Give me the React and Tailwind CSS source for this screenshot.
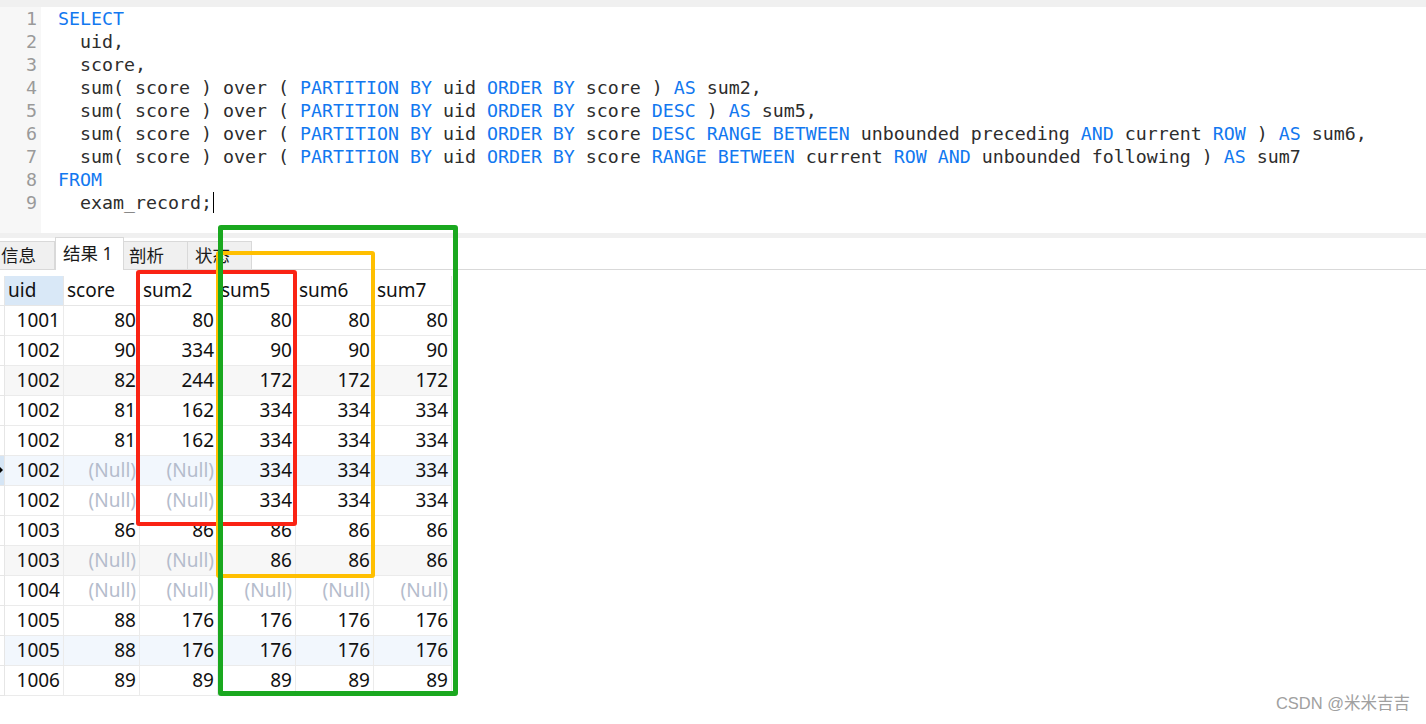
import React from "react";

const K = ({ children }) => <span className="text-[#1278f0]">{children}</span>;

const codeLines = [
  [<K key="a">SELECT</K>],
  ["  uid,"],
  ["  score,"],
  ["  sum( score ) over ( ", <K key="a">PARTITION BY</K>, " uid ", <K key="b">ORDER BY</K>, " score ) ", <K key="c">AS</K>, " sum2,"],
  ["  sum( score ) over ( ", <K key="a">PARTITION BY</K>, " uid ", <K key="b">ORDER BY</K>, " score ", <K key="d">DESC</K>, " ) ", <K key="c">AS</K>, " sum5,"],
  ["  sum( score ) over ( ", <K key="a">PARTITION BY</K>, " uid ", <K key="b">ORDER BY</K>, " score ", <K key="d">DESC RANGE BETWEEN</K>, " unbounded preceding ", <K key="e">AND</K>, " current ", <K key="f">ROW</K>, " ) ", <K key="c">AS</K>, " sum6,"],
  ["  sum( score ) over ( ", <K key="a">PARTITION BY</K>, " uid ", <K key="b">ORDER BY</K>, " score ", <K key="d">RANGE BETWEEN</K>, " current ", <K key="f">ROW AND</K>, " unbounded following ) ", <K key="c">AS</K>, " sum7"],
  [<K key="a">FROM</K>],
  ["  exam_record;"],
];

const rows = [
  [1001, 80, 80, 80, 80, 80],
  [1002, 90, 334, 90, 90, 90],
  [1002, 82, 244, 172, 172, 172],
  [1002, 81, 162, 334, 334, 334],
  [1002, 81, 162, 334, 334, 334],
  [1002, null, null, 334, 334, 334],
  [1002, null, null, 334, 334, 334],
  [1003, 86, 86, 86, 86, 86],
  [1003, null, null, 86, 86, 86],
  [1004, null, null, null, null, null],
  [1005, 88, 176, 176, 176, 176],
  [1005, 88, 176, 176, 176, 176],
  [1006, 89, 89, 89, 89, 89],
];

const headers = ["uid", "score", "sum2", "sum5", "sum6", "sum7"];
const widths = ["w-[59px]", "w-[76px]", "w-[78px]", "w-[78px]", "w-[78px]", "w-[78px]"];

function rowBg(i) {
  if (i === 2 || i === 8) return "bg-[#f7f7f7]";
  if (i === 5 || i === 11) return "bg-[#f2f7fd]";
  return "bg-white";
}

export default function App() {
  return (
    <div className="relative w-[1426px] h-[724px] bg-white overflow-hidden" style={{ fontFamily: '"Noto Sans", "Noto Sans CJK SC", sans-serif' }}>
      <div className="h-[7px] bg-[#f0f0f0]" />
      {/* editor */}
      <div className="flex h-[226px]">
        <div className="w-[41px] bg-[#f7f7f7] pr-[4px] text-right text-[#9a9a9a] text-[18.27px] leading-[23px]" style={{ fontFamily: '"DejaVu Sans Mono", monospace' }}>
          {codeLines.map((_, i) => (
            <div key={i} className="h-[23px]">{i + 1}</div>
          ))}
        </div>
        <div className="pl-[17px] text-[#2d2d2d] text-[18.27px] leading-[23px]" style={{ fontFamily: '"DejaVu Sans Mono", monospace' }}>
          {codeLines.map((l, i) => (
            <div key={i} className="h-[23px] whitespace-pre flex items-center">
              <span>{l}</span>
              {i === 8 && <span className="inline-block w-px h-[21px] bg-black ml-px" />}
            </div>
          ))}
        </div>
      </div>
      <div className="h-[5px] bg-[#f0f0f0]" />
      {/* tabs */}
      <div className="flex items-end h-[32px] border-b border-[#d9d9d9] text-[17.5px] text-[#1a1a1a]">
        <div className="ml-[-8px] w-[63px] h-[28px] pl-[8px] bg-[#f0f0f0] border border-b-0 border-[#d9d9d9] leading-[26px]">信息</div>
        <div className="w-[69px] pl-[7px] bg-white border border-b-0 border-[#d9d9d9] leading-[30px] mb-[-1px] h-[33px]">结果 1</div>
        <div className="w-[64px] h-[28px] pl-[5px] bg-[#f0f0f0] border border-l-0 border-b-0 border-[#d9d9d9] leading-[26px]">剖析</div>
        <div className="w-[64px] h-[28px] pl-[7px] bg-[#f0f0f0] border border-l-0 border-b-0 border-[#d9d9d9] leading-[26px]">状态</div>
      </div>
      {/* grid */}
      <div className="mt-[6px] w-max text-[19px] text-[#111]">
        <div className="flex h-[30px]">
          <div className="w-[5px] border-r border-b border-[#e6e6e6]" />
          {headers.map((h, j) => (
            <div key={h} className={`${widths[j]} h-[30px] pl-[3px] border-r border-b border-[#e6e6e6] leading-[29px] ${j === 0 ? "bg-[#d9e8f7]" : "bg-white"}`}>{h}</div>
          ))}
        </div>
        {rows.map((r, i) => (
          <div key={i} className={`flex h-[30px] ${rowBg(i)}`}>
            <div className={`relative w-[5px] border-r border-b border-[#e6e6e6] ${i === 5 ? "bg-[#d5e5f5]" : "bg-white"}`}>
              {i === 5 && (
                <div className="absolute left-0 top-[11px] w-0 h-0 border-y-[3px] border-y-transparent border-l-[3px] border-l-black" />
              )}
            </div>
            {r.map((v, j) => (
              <div key={j} className={`${widths[j]} h-[30px] pr-[3px] text-right border-r border-b border-[#ebebeb] leading-[29px] ${v === null ? "text-[#b4bccc]" : ""}`}>
                {v === null ? "(Null)" : v}
              </div>
            ))}
          </div>
        ))}
      </div>
      {/* annotation boxes */}
      <div className="absolute left-[136px] top-[270px] w-[161px] h-[256px] border-[4px] border-[#fa2314] rounded-[3px]" />
      <div className="absolute left-[216px] top-[251px] w-[159px] h-[327px] border-[4px] border-[#ffbf00] rounded-[3px]" />
      <div className="absolute left-[218px] top-[225px] w-[240px] h-[471px] border-[5px] border-[#1aa81f] rounded-[3px]" />
      <div className="absolute right-[16px] bottom-[8px] text-[16.5px] text-[#a0a0a0]" style={{ fontFamily: '"Liberation Sans", "Noto Sans CJK SC", sans-serif' }}>CSDN @米米吉吉</div>
    </div>
  );
}
